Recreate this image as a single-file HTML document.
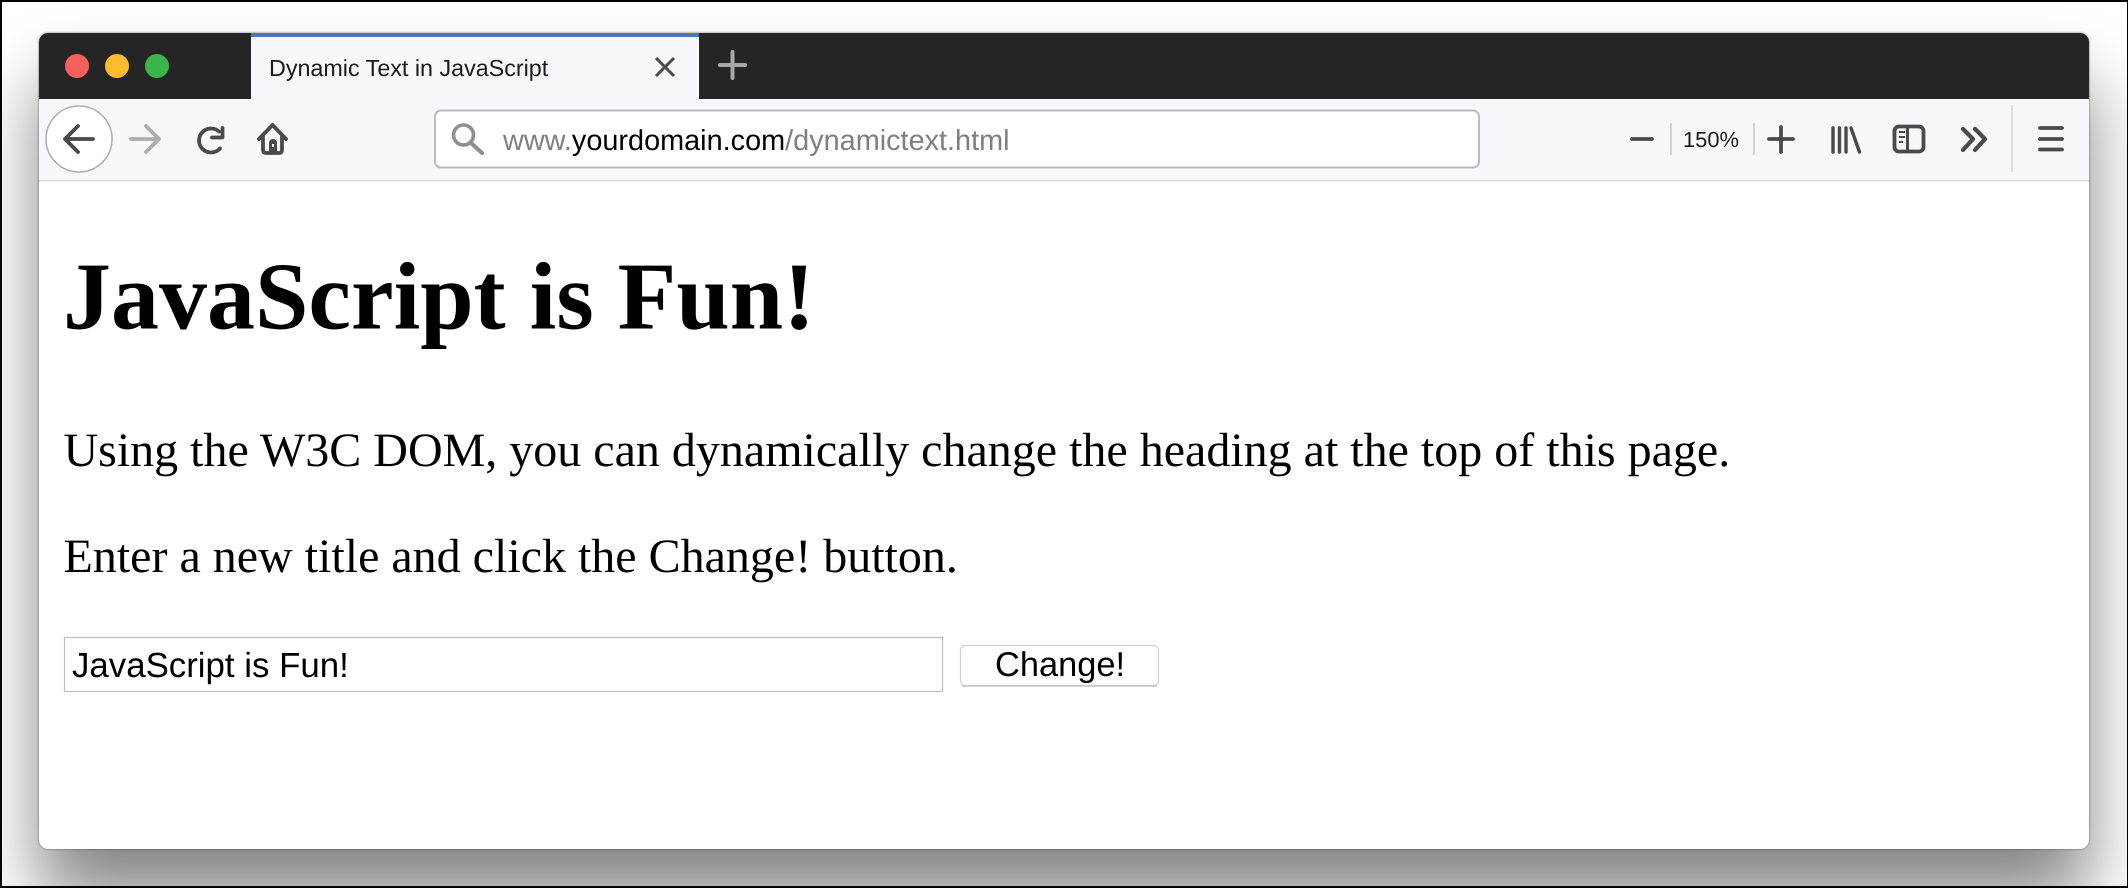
<!DOCTYPE html>
<html><head><meta charset="utf-8"><title>Dynamic Text in JavaScript</title>
<style>
html,body{margin:0;padding:0;width:2128px;height:888px;overflow:hidden;background:#fff}
#f{position:absolute;left:0;top:0;width:2128px;height:888px;overflow:hidden;background:#fff}
#w{position:absolute;left:39px;top:33px;width:2050px;height:816px;border-radius:9px;background:#fff;box-shadow:0 50px 70px rgba(0,0,0,.48),0 0 2px rgba(0,0,0,.55)}
#b{position:absolute;left:0;top:0;width:2128px;height:888px;box-sizing:border-box;border:solid #000;border-width:2px 1px 2px 2px}
svg{position:absolute;left:0;top:0}
text{text-rendering:geometricPrecision}
.s{font-family:"Liberation Sans",sans-serif}
.t{font-family:"Liberation Serif",serif;fill:#000}
</style></head><body>
<div id="f"><div id="w"></div>
<svg width="2128" height="888" viewBox="0 0 2128 888" xmlns="http://www.w3.org/2000/svg">
<path d="M39 99V42a9 9 0 0 1 9-9H2080a9 9 0 0 1 9 9V99Z" fill="#252525"/>
<rect x="39" y="99" width="2050" height="81" fill="#f8f8fc"/>
<rect x="39" y="180" width="2050" height="1.5" fill="#dcdce0"/>
<rect x="251" y="33" width="448" height="66" fill="#f8f8fc"/>
<rect x="251" y="33" width="448" height="4" fill="#4678c0"/>
<circle cx="77" cy="66" r="12" fill="#f5605a"/><circle cx="117" cy="66" r="12" fill="#fdbc2c"/><circle cx="157" cy="66" r="12" fill="#3bb54a"/>
<text class="s" x="269" y="76" font-size="23.3" fill="#1a1a1a">Dynamic Text in JavaScript</text>
<path d="M656 58l18 18M674 58l-18 18" stroke="#4a4a4a" stroke-width="3" fill="none"/>
<path d="M732.500 52v26M720 65h25" stroke="#a8a8a8" stroke-width="4" stroke-linecap="round" fill="none"/>

<circle cx="79" cy="139" r="33" fill="#fff" stroke="#b0b0b0" stroke-width="1.600"/>
<g fill="none" stroke-linecap="round" stroke-linejoin="round" stroke-width="3.800">
<path d="M65 139H93M78 126L65 139L78 152" stroke="#4a4a4d"/>
<path d="M131 139H159M146 126L159 139L146 152" stroke="#adadaf"/>
<path d="M220 148.500A12 12 0 1 1 219 131.500" stroke="#4a4a4d"/>
<path d="M222.500 128V137.500H212" stroke="#4a4a4d"/>
<path d="M259 139L272.500 125L286 139M263 135V150Q263 153 266 153H279Q282 153 282 150V135" stroke="#4a4a4d"/>
</g>
<path d="M269 153v-10a3.500 3.500 0 0 1 8 0v10Z" fill="#4a4a4d"/><rect x="272" y="144" width="2" height="3" fill="#f8f8fc"/>

<rect x="435" y="110.500" width="1044" height="57" rx="6" fill="#fff" stroke="#bcbcbc" stroke-width="2"/>
<circle cx="463.500" cy="135" r="10" fill="none" stroke="#8f8f8f" stroke-width="3.600"/>
<path d="M471 143L482 153" stroke="#8f8f8f" stroke-width="4" stroke-linecap="round"/>
<text class="s" x="503" y="150" font-size="28.85" fill="#7f7f7f">www.<tspan fill="#000">yourdomain.com</tspan>/dynamictext.html</text>

<g fill="none" stroke="#4a4a4d" stroke-linecap="round" stroke-linejoin="round" stroke-width="3.800">
<path d="M1632 139H1652"/>
<path d="M1769 139H1793M1781 127V152"/>
<path d="M1833 128V152M1839.500 128V152M1846 128V152M1851 128L1859.500 152" stroke-width="3.400"/>
<rect x="1894.500" y="126.500" width="29" height="25" rx="4.500"/>
<path d="M1907.500 127V151" stroke-width="3"/>
<path d="M1963 129L1973 139L1963 150M1975 129L1985 139L1975 150" stroke-width="4.200"/>
<path d="M2040 128H2062M2040 139H2062M2040 149.500H2062"/>
</g>
<path d="M1899 132h6M1899 137h6M1899 142h4" stroke="#4a4a4d" stroke-width="2" fill="none"/>
<path d="M1671 123V155M1754 123V155" stroke="#c8c8cc" stroke-width="1.500"/>
<path d="M2012 105V172" stroke="#d8d8dc" stroke-width="1.600"/>
<text class="s" x="1683" y="147" font-size="21.9" fill="#1a1a1a">150%</text>

<text class="t" x="63" y="328.500" font-size="96" font-weight="bold">JavaScript is Fun!</text>
<text class="t" x="63.500" y="466" font-size="48">Using the W3C DOM, you can dynamically change the heading at the top of this page.</text>
<text class="t" x="63.500" y="572" font-size="48">Enter a new title and click the Change! button.</text>

<rect x="64.500" y="637.500" width="878" height="54" fill="#fff" stroke="#bdbdbd" stroke-width="1.200"/>
<text class="s" x="72" y="677" font-size="34.85" fill="#000">JavaScript is Fun!</text>
<rect x="960.500" y="645.500" width="198" height="40" rx="5" fill="#fff" stroke="#d2d2d2" stroke-width="1.200"/>
<path d="M962 686H1157" stroke="#c4c4c4" stroke-width="1.500"/>
<text class="s" x="995" y="676" font-size="34.400" fill="#000">Change!</text>
</svg>
<div id="b"></div></div>
</body></html>
